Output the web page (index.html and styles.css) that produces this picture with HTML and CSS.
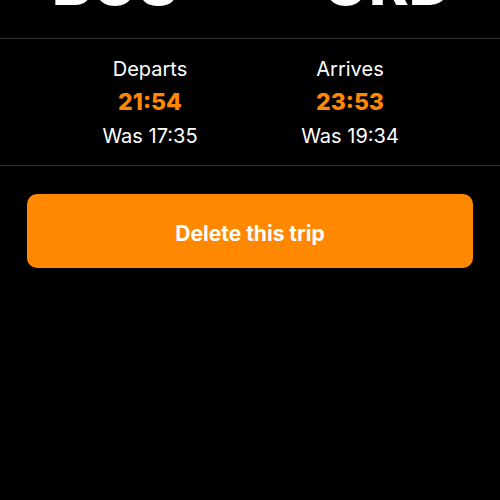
FILE: index.html
```html
<!DOCTYPE html>
<html lang="en">
  <head>
    <meta charset="UTF-8" />
    <meta name="viewport" content="width=device-width, initial-scale=1" />
    <title>Trip details</title>
    <link rel="stylesheet" href="styles.css">
  </head>
  <body>
    <div class="route">
      <span class="code">BOS</span>
      <span class="code">ORD</span>
    </div>

    <div class="times">
      <div class="time-col">
        <div class="label">Departs</div>
        <div class="time">21:54</div>
        <div class="was">Was 17:35</div>
      </div>
      <div class="time-col">
        <div class="label">Arrives</div>
        <div class="time">23:53</div>
        <div class="was">Was 19:34</div>
      </div>
    </div>

    <div class="actions">
      <button class="delete-btn">Delete this trip</button>
    </div>
  </body>
</html>
```

FILE: styles.css
```css
html,
body {
  margin: 0;
  padding: 0;
  height: 100%;
  background: #000;
  color: #fff;
  font-family: Inter, "Noto Sans", sans-serif;
}
.route {
  display: flex;
  justify-content: space-between;
  height: 38px;
  padding: 0 48px 0 52px;
  overflow: hidden;
  border-bottom: 1px solid #333;
}
.code {
  font-size: 60px;
  font-weight: 800;
  line-height: 1;
  margin-top: -47px;
}
.times {
  display: grid;
  grid-template-columns: 1fr 1fr;
  padding: 0 50px;
  height: 127px;
  border-bottom: 1px solid #333;
  box-sizing: border-box;
}
.time-col {
  display: flex;
  flex-direction: column;
  align-items: center;
  padding-top: 18px;
}
.label {
  font-size: 20px;
  line-height: 24px;
}
.time {
  color: #ff8800;
  font-size: 23px;
  font-weight: 800;
  line-height: 26px;
  margin-top: 8px;
}
.was {
  font-size: 20px;
  line-height: 24px;
  margin-top: 9px;
}
.actions {
  padding: 28px 27px;
}
.delete-btn {
  display: block;
  width: 100%;
  height: 74px;
  padding-top: 6px;
  border: none;
  border-radius: 10px;
  background: #ff8800;
  color: #fff;
  font-family: inherit;
  font-size: 21px;
  font-weight: 700;
}
```
